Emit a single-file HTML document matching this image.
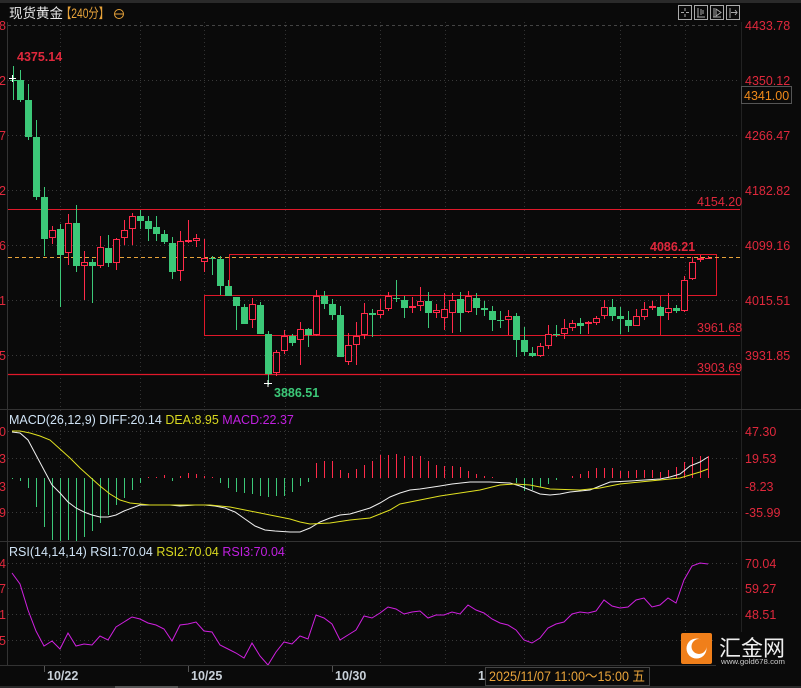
<!DOCTYPE html>
<html><head><meta charset="utf-8">
<style>
html,body{margin:0;padding:0;background:#0a0a0a;width:801px;height:688px;overflow:hidden}
svg{display:block}
text{font-family:"Liberation Sans","Noto Sans CJK SC",sans-serif}
</style></head>
<body>
<svg id="s" width="801" height="688" viewBox="0 0 801 688" xmlns="http://www.w3.org/2000/svg">
<rect width="801" height="688" fill="#0a0a0a"/>
<rect x="0" y="0" width="801" height="3" fill="#2a2a2a"/>
<g id="grid"></g>
<g id="chart"></g>
<line x1="0" y1="409.5" x2="801" y2="409.5" stroke="#333" stroke-width="1"/>
<line x1="0" y1="541.5" x2="801" y2="541.5" stroke="#333" stroke-width="1"/>
<line x1="0" y1="665.5" x2="801" y2="665.5" stroke="#333" stroke-width="1"/>
<line x1="7.5" y1="22" x2="7.5" y2="666" stroke="#333"/>
<text x="9" y="18" fill="#e8e8e8" font-size="13.5">现货黄金</text>
<text x="61" y="18" fill="#e8a33a" font-size="13.5" textLength="48" lengthAdjust="spacingAndGlyphs">【240分】</text>
<circle cx="119" cy="14" r="4.5" fill="#0a0a0a" stroke="#e8a33a"/><line x1="114.5" y1="14" x2="123.5" y2="14" stroke="#e8a33a"/>
<g fill="none" stroke="#aaa" stroke-width="1">
<rect x="678.5" y="5.5" width="13" height="14"/><rect x="694.5" y="5.5" width="13" height="14"/><rect x="710.5" y="5.5" width="13" height="14"/><rect x="726.5" y="5.5" width="13" height="14"/>
<path d="M685 8v3M685 14v3M681 12.5h3M686 12.5h3"/>
<path d="M698 8v9M697 17h8M701 9v6M703 10v4"/>
<path d="M714 8v9M713 17h8M716 9l5 3.5-5 3.5z"/>
<path d="M730 8v10M731 12.5h6M735 10l2 2.5-2 2.5"/>
</g>
<g font-size="12.5" fill="#e0283c">
<text x="745" y="30">4433.78</text>
<text x="745" y="85">4350.12</text>
<text x="745" y="140">4266.47</text>
<text x="745" y="195">4182.82</text>
<text x="745" y="250">4099.16</text>
<text x="745" y="305">4015.51</text>
<text x="745" y="360">3931.85</text>
<text x="745" y="436">47.30</text>
<text x="745" y="463">19.53</text>
<text x="745" y="491">-8.23</text>
<text x="745" y="517">-35.99</text>
<text x="745" y="568">70.04</text>
<text x="745" y="593">59.27</text>
<text x="745" y="619">48.51</text>
<text x="745" y="645">37.75</text>
<text x="6" y="30" text-anchor="end">4433.78</text>
<text x="6" y="85" text-anchor="end">4350.12</text>
<text x="6" y="140" text-anchor="end">4266.47</text>
<text x="6" y="195" text-anchor="end">4182.82</text>
<text x="6" y="250" text-anchor="end">4099.16</text>
<text x="6" y="305" text-anchor="end">4015.51</text>
<text x="6" y="360" text-anchor="end">3931.85</text>
<text x="6" y="436" text-anchor="end">47.30</text>
<text x="6" y="463" text-anchor="end">19.53</text>
<text x="6" y="491" text-anchor="end">-8.23</text>
<text x="6" y="517" text-anchor="end">-35.99</text>
<text x="6" y="568" text-anchor="end">70.04</text>
<text x="6" y="593" text-anchor="end">59.27</text>
<text x="6" y="619" text-anchor="end">48.51</text>
<text x="6" y="645" text-anchor="end">37.75</text>
</g>
<rect x="741.5" y="86.5" width="50" height="17" fill="#0a0a0a" stroke="#555"/>
<text x="744" y="100" font-size="12.5" fill="#f08a1a">4341.00</text>
<g font-size="12.5" fill="#e0283c">
<text x="697" y="206">4154.20</text>
<text x="697" y="332">3961.68</text>
<text x="697" y="372">3903.69</text>
<text x="650" y="251" font-weight="bold">4086.21</text>
<text x="17" y="61" font-weight="bold">4375.14</text>
</g>
<text x="274" y="397" font-size="12.5" fill="#3cc878" font-weight="bold">3886.51</text>
<text x="9" y="424" font-size="12.5"><tspan fill="#cfe3f5">MACD(26,12,9) DIFF:20.14 </tspan><tspan fill="#d8d820"> DEA:8.95 </tspan><tspan fill="#c020e0"> MACD:22.37</tspan></text>
<text x="9" y="556" font-size="12.5"><tspan fill="#cfe3f5">RSI(14,14,14) RSI1:70.04 </tspan><tspan fill="#d8d820"> RSI2:70.04 </tspan><tspan fill="#c020e0"> RSI3:70.04</tspan></text>
<g stroke="#555"><line x1="44.5" y1="666" x2="44.5" y2="672"/><line x1="188.5" y1="666" x2="188.5" y2="672"/><line x1="332.5" y1="666" x2="332.5" y2="672"/></g>
<g font-size="12.5" fill="#c8d0d8" font-weight="bold">
<text x="47" y="680">10/22</text><text x="191" y="680">10/25</text><text x="335" y="680">10/30</text><text x="478" y="680">1</text>
</g>
<rect x="485.5" y="667.5" width="164" height="18" fill="#0a0a0a" stroke="#444"/>
<text x="489" y="681" font-size="14" fill="#e8a33a" textLength="156" lengthAdjust="spacingAndGlyphs">2025/11/07 11:00～15:00 五</text>
<rect x="0" y="686" width="801" height="2" fill="#2a2a2a"/>
<rect x="115" y="686" width="63" height="2" fill="#555"/>
<rect x="681" y="633" width="31" height="31" rx="2" fill="#f07f1a"/>
<circle cx="696.5" cy="648.5" r="10" fill="#fff"/>
<circle cx="699" cy="646.5" r="7.5" fill="#f07f1a"/>
<rect x="716" y="632" width="85" height="35" fill="#0a0a0a"/>
<text x="719" y="656" font-size="22" fill="#eee" textLength="66" lengthAdjust="spacingAndGlyphs">汇金网</text>
<text x="721" y="664" font-size="7" fill="#ccc" textLength="64" lengthAdjust="spacingAndGlyphs">www.gold678.com</text>
</svg>
<script>
var NS="http://www.w3.org/2000/svg";
function el(p,t,a){var e=document.createElementNS(NS,t);for(var k in a)e.setAttribute(k,a[k]);p.appendChild(e);return e;}
var g=document.getElementById('grid'),c=document.getElementById('chart');
var hs=[80,135,190,245,300,355,431,458,512,563,588,614,640];
hs.forEach(function(y){el(g,'line',{x1:8,y1:y+.5,x2:740,y2:y+.5,stroke:'#3a3a3a','stroke-dasharray':'1,3'});});
el(g,'line',{x1:8,y1:25.5,x2:740,y2:25.5,stroke:'#444','stroke-dasharray':'3,3'});
[60,140,204,285,380,445,524,620,685].forEach(function(x){el(g,'line',{x1:x+.5,y1:22,x2:x+.5,y2:666,stroke:'#333','stroke-dasharray':'1,3'});});
el(g,'line',{x1:741.5,y1:22,x2:741.5,y2:666,stroke:'#222'});
var R='#e0182a';
el(c,'line',{x1:8,y1:209.5,x2:740,y2:209.5,stroke:R});
el(c,'line',{x1:8,y1:374.5,x2:740,y2:374.5,stroke:R,'stroke-width':1.2});
el(c,'line',{x1:204,y1:335.5,x2:740,y2:335.5,stroke:R});
el(c,'polyline',{points:'229.5,296 229.5,254.5 716.5,254.5 716.5,295.5 204.5,295.5 204.5,335',fill:'none',stroke:R});
el(c,'line',{x1:660.5,y1:296,x2:660.5,y2:335,stroke:R});
el(c,'line',{x1:8,y1:257.5,x2:740,y2:257.5,stroke:'#e8a33a','stroke-dasharray':'4,3'});
var C=[[13,'g',80,81,66,100],[20,'g',80,100,70,102],[28,'g',100,137,84,140],[36,'g',137,197,120,200],[44,'g',197,239,187,256],[52,'r',230,238,226,244],[60,'g',229,255,224,307],[68,'r',223,253,214,265],[76,'g',223,266,205,272],[84,'r',262,266,251,300],[92,'g',262,266,259,303],[100,'r',247,266,236,268],[108,'g',248,263,235,267],[116,'r',239,263,238,270],[124,'r',230,238,220,245],[132,'r',216,229,213,245],[140,'g',216,221,210,229],[148,'g',221,229,216,241],[156,'g',227,234,216,241],[164,'g',234,242,230,244],[172,'g',243,272,237,279],[180,'r',241,271,231,281],[188,'r',240,242,220,243],[196,'r',238,241,234,247],[204,'r',258,262,239,272],[212,'g',258,259,256,275],[220,'g',259,286,256,295],[228,'g',286,296,280,296],[236,'g',297,306,297,330],[244,'g',307,324,304,324],[252,'r',304,320,298,328],[260,'g',305,334,302,334],[268,'g',334,374,331,385],[276,'r',352,373,350,376],[284,'r',336,351,330,354],[292,'g',336,343,334,346],[300,'r',329,340,322,365],[308,'g',329,335,328,347],[316,'r',296,335,290,336],[324,'g',296,304,291,309],[332,'g',304,315,299,320],[340,'g',315,357,306,357],[348,'r',345,362,333,365],[356,'r',336,345,322,365],[364,'r',313,335,303,339],[372,'g',313,315,309,337],[380,'r',310,315,299,318],[388,'r',296,309,292,311],[396,'g',298,298,280,302],[404,'g',300,308,296,318],[412,'r',306,308,297,313],[420,'r',301,306,287,311],[428,'g',301,313,292,328],[436,'r',310,313,304,318],[444,'r',309,318,293,330],[452,'r',300,313,293,333],[460,'g',299,313,292,332],[468,'r',296,312,291,313],[476,'g',298,308,293,315],[484,'g',308,310,301,316],[492,'g',311,320,306,331],[500,'g',320,321,311,328],[508,'r',316,320,310,335],[516,'g',316,340,313,357],[524,'g',340,352,327,356],[532,'g',353,356,347,357],[540,'r',346,356,343,357],[548,'r',334,346,325,349],[556,'g',334,335,325,337],[564,'r',328,334,319,339],[572,'r',323,328,320,331],[580,'g',323,326,318,334],[588,'r',322,324,321,334],[596,'r',318,323,316,325],[604,'r',307,316,300,319],[612,'g',307,316,299,321],[620,'g',316,319,307,334],[628,'g',320,326,311,332],[636,'r',316,326,309,326],[644,'r',309,317,302,320],[652,'r',306,308,301,310],[660,'g',307,316,306,316],[668,'r',308,313,293,320],[676,'g',308,311,305,313],[684,'r',280,311,276,312],[692,'r',262,279,257,280],[700,'r',258,260,255,262],[708,'r',258,259,256,259]];
var GC='#3cc878',RC='#ff2a4a';
C.forEach(function(k){var x=k[0],col=k[1]=='g'?GC:RC;var h=Math.max(1,k[3]-k[2]);
el(c,'line',{x1:x+.5,y1:k[4],x2:x+.5,y2:k[5],stroke:col});
if(k[1]=='g')el(c,'rect',{x:x-3,y:k[2],width:7,height:h,fill:col});
else if(h<=2)el(c,'rect',{x:x-3,y:k[2],width:7,height:h,fill:col});
else el(c,'rect',{x:x-2.5,y:k[2]+.5,width:6,height:h-1,fill:'#0a0a0a',stroke:col});});
el(c,'path',{d:'M9 78.5h7M12.5 75v7M264 383.5h8M268 380v7',stroke:'#fff'});
var H=[[12,479],[20,481],[28,488],[36,507],[44,527],[52,540],[60,541],[68,540],[76,541],[84,537],[92,531],[100,523],[108,515],[116,505],[124,498],[132,490],[140,483],[148,477],[156,477],[164,475],[172,481],[180,476],[188,473],[196,474],[204,476],[212,477],[220,483],[228,488],[236,492],[244,493],[252,494],[260,496],[268,497],[276,496],[284,496],[292,492],[300,486],[308,482],[316,463],[324,461],[332,461],[340,470],[348,473],[356,469],[364,465],[372,461],[380,455],[388,455],[396,454],[404,456],[412,456],[420,456],[428,461],[436,465],[444,466],[452,466],[460,467],[468,471],[476,474],[484,476],[492,477],[500,478],[508,478],[516,483],[524,491],[532,490],[540,487],[548,484],[556,480],[564,478],[572,476],[580,474],[588,471],[596,468],[604,468],[612,468],[620,471],[628,471],[636,470],[644,470],[652,470],[660,472],[668,470],[676,467],[684,462],[692,457],[700,456],[708,456]];
H.forEach(function(b){var y=b[1];if(Math.abs(y-478)<1)return;el(c,'line',{x1:b[0]+.5,y1:478,x2:b[0]+.5,y2:y,stroke:y>478?GC:RC});});
function pl(pts,col){el(c,'polyline',{points:pts,fill:'none',stroke:col,'stroke-width':1});}
pl('12,432 20,433 28,440 36,455 44,470 52,485 60,493 68,502 76,508 84,512 92,515 100,517 108,517 116,515 124,511 132,508 140,505 150,505 170,505 180,506 195,505 205,505 215,506 225,508 235,512 245,519 255,526 265,530 275,531 290,532 300,532 310,528 320,522 330,518 340,515 350,514 360,511 370,508 380,503 390,497 400,493 410,490 420,489 440,486 452,484 470,482 490,482 510,483 520,486 530,490 540,494 550,495 560,494 570,492 590,490 600,486 610,482 630,481 660,479 670,477 680,474 690,466 700,462 708,457','#f0f0f0');
pl('12,431 20,431 30,433 40,436 50,440 60,449 70,458 80,468 90,477 100,486 110,494 120,500 130,503 150,505 210,505 230,507 250,511 270,515 290,519 300,522 310,524 330,523 350,520 370,518 390,510 400,504 420,500 440,496 460,493 480,490 500,485 515,484 530,485 550,489 580,490 600,488 620,484 660,480 680,478 700,472 708,469','#e0e020');
pl('12,573 20,584 28,610 36,631 44,646 52,641 60,649 68,633 76,646 84,644 92,645 100,636 108,640 116,627 124,622 132,617 140,619 148,623 156,625 164,629 172,641 180,625 188,624 196,622 204,631 212,632 220,645 228,649 236,653 244,658 252,643 260,656 268,665 276,652 284,642 292,644 300,636 308,639 316,615 324,618 332,624 340,640 348,635 356,630 364,616 372,618 380,613 388,607 396,609 404,614 412,612 420,611 428,618 436,615 444,615 452,612 460,614 468,605 476,610 484,613 492,619 500,623 508,625 516,630 524,640 532,643 540,638 548,628 556,624 564,622 572,614 580,612 588,613 596,611 604,600 612,606 620,608 628,607 636,600 644,598 652,607 660,605 668,598 676,603 684,580 692,566 700,563 708,564','#d020e0');
</script>
</body></html>
